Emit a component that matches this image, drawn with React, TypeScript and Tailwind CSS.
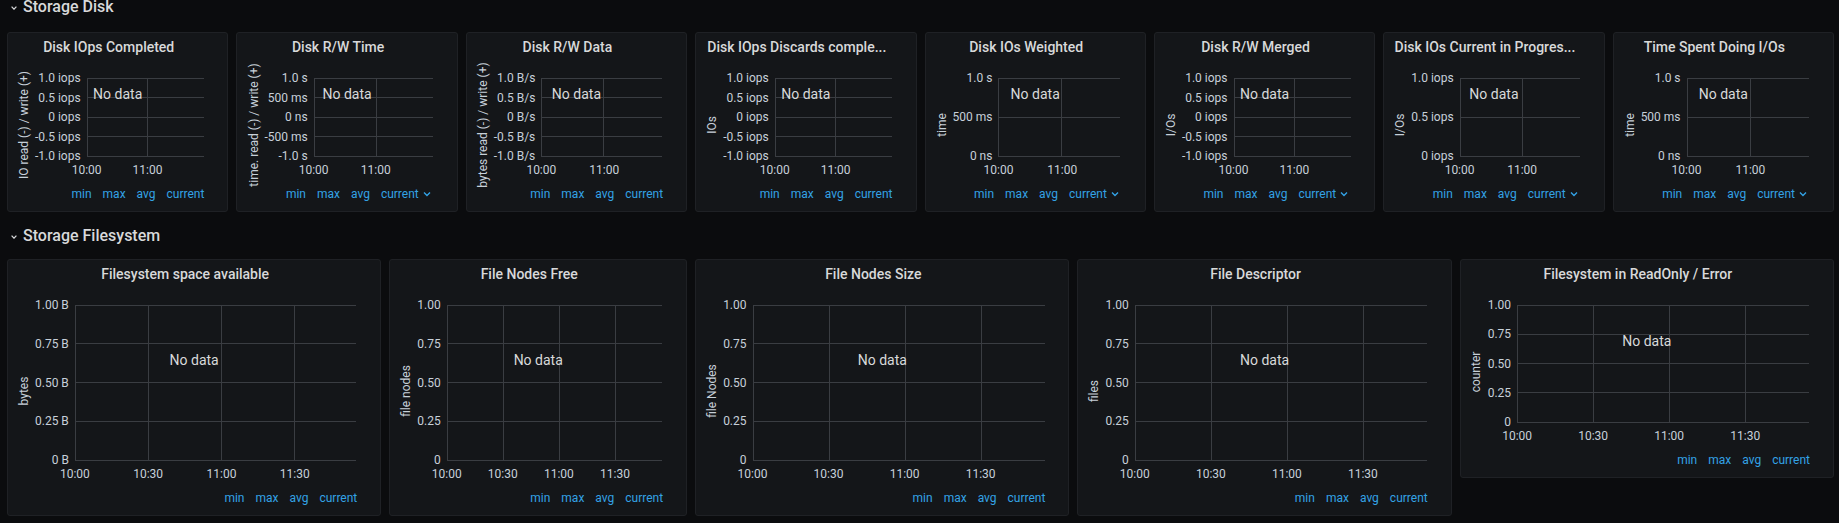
import React from 'react';

type PanelDef = {
  title: string;
  yLabel: string;
  ticks: string[];
  sort?: boolean;
  span: 3 | 4 | 5;
  short?: boolean;
};

const SPAN: Record<number, string> = { 3: 'col-span-3', 4: 'col-span-4', 5: 'col-span-5' };

const IOPS = ['1.0 iops', '0.5 iops', '0 iops', '-0.5 iops', '-1.0 iops'];
const SECS = ['1.0 s', '500 ms', '0 ns'];
const FRAC = ['1.00', '0.75', '0.50', '0.25', '0'];

const X_DISK: [string, number][] = [['10:00', 0], ['11:00', 0.521]];
const X_FS: [string, number][] = [['10:00', 0], ['10:30', 0.2605], ['11:00', 0.521], ['11:30', 0.7815]];

const DISK: PanelDef[] = [
  { title: 'Disk IOps Completed', yLabel: 'IO read (-) / write (+)', ticks: IOPS, span: 3 },
  { title: 'Disk R/W Time', yLabel: 'time. read (-) / write (+)', ticks: ['1.0 s', '500 ms', '0 ns', '-500 ms', '-1.0 s'], sort: true, span: 3 },
  { title: 'Disk R/W Data', yLabel: 'bytes read (-) / write (+)', ticks: ['1.0 B/s', '0.5 B/s', '0 B/s', '-0.5 B/s', '-1.0 B/s'], span: 3 },
  { title: 'Disk IOps Discards comple...', yLabel: 'IOs', ticks: IOPS, span: 3 },
  { title: 'Disk IOs Weighted', yLabel: 'time', ticks: SECS, sort: true, span: 3 },
  { title: 'Disk R/W Merged', yLabel: 'I/Os', ticks: IOPS, sort: true, span: 3 },
  { title: 'Disk IOs Current in Progres...', yLabel: 'I/Os', ticks: ['1.0 iops', '0.5 iops', '0 iops'], sort: true, span: 3 },
  { title: 'Time Spent Doing I/Os', yLabel: 'time', ticks: SECS, sort: true, span: 3 },
];

const FS: PanelDef[] = [
  { title: 'Filesystem space available', yLabel: 'bytes', ticks: ['1.00 B', '0.75 B', '0.50 B', '0.25 B', '0 B'], span: 5 },
  { title: 'File Nodes Free', yLabel: 'file nodes', ticks: FRAC, span: 4 },
  { title: 'File Nodes Size', yLabel: 'file Nodes', ticks: FRAC, span: 5 },
  { title: 'File Descriptor', yLabel: 'files', ticks: FRAC, span: 5 },
  { title: 'Filesystem in ReadOnly / Error', yLabel: 'counter', ticks: FRAC, span: 5, short: true },
];

function RowHeader({ title, className }: { title: string; className: string }) {
  return (
    <div className={`h-[14px] flex items-center pl-[11px] gap-[6px] ${className}`}>
      <svg width="6" height="4" viewBox="0 0 6 4" className="mt-px">
        <path d="M0.6 0.6 L3 3.2 L5.4 0.6" stroke="#d8d9da" strokeWidth="1.2" fill="none" />
      </svg>
      <span className="text-[16px] leading-4 font-medium text-[#d8d9da]">{title}</span>
    </div>
  );
}

function GraphPanel({ p, xTicks, height }: { p: PanelDef; xTicks: [string, number][]; height: string }) {
  const n = p.ticks.length - 1;
  return (
    <div className={`${SPAN[p.span]} ${height} relative flex flex-col bg-[#141619] border border-[#1f2125] rounded-[3px]`}>
      <div className="h-[28px] shrink-0 flex items-center justify-center pr-[18px]">
        <span className="text-[14px] leading-4 font-medium text-[#d8d9da] whitespace-nowrap">{p.title}</span>
      </div>

      <div className="flex-1 min-h-0 flex pt-[17px] pr-[24px]">
        <div className="w-[14px] ml-[9px] mr-[4px] mb-[30px] flex items-center justify-center">
          <span className="whitespace-nowrap -rotate-90 translate-y-[8px] text-[12px] leading-[14px] text-[#c7d0d9]">
            {p.yLabel}
          </span>
        </div>

        <div className="flex flex-col mr-[6px]">
          <div className="flex-1 -my-[7px] flex flex-col justify-between items-end">
            {p.ticks.map(t => (
              <span key={t} className="text-[12px] leading-[14px] text-[#c7d0d9] whitespace-nowrap">
                {t}
              </span>
            ))}
          </div>
          <div className="h-[30px] shrink-0" />
        </div>

        <div className="flex-1 min-w-0 flex flex-col">
          <div className="flex-1 relative">
            <svg className="absolute inset-0 w-full h-full overflow-visible" shapeRendering="crispEdges">
              {p.ticks.map((t, i) => (
                <line key={t} x1="0" x2="100%" y1={`${(i / n) * 100}%`} y2={`${(i / n) * 100}%`} stroke="#3a3d42" strokeWidth="1" />
              ))}
              {xTicks.map(([l, f]) => (
                <line key={l} x1={`${f * 100}%`} x2={`${f * 100}%`} y1="0" y2="100%" stroke="#3a3d42" strokeWidth="1" />
              ))}
            </svg>
          </div>
          <div className="h-[30px] shrink-0 relative">
            {xTicks.map(([l, f]) => (
              <span
                key={l}
                className="absolute top-[7px] -translate-x-1/2 text-[12px] leading-[14px] text-[#c7d0d9] whitespace-nowrap"
                style={{ left: `${f * 100}%` }}
              >
                {l}
              </span>
            ))}
          </div>
        </div>
      </div>

      <div className="h-4 mb-[9px] shrink-0 pr-[23px] flex items-center justify-end gap-[11px] text-[12px] leading-4 text-[#33a2e5]">
        <span>min</span>
        <span>max</span>
        <span>avg</span>
        <span className="flex items-center">
          current
          {p.sort && (
            <svg width="14" height="14" viewBox="0 0 14 14" className="ml-px">
              <path d="M4 5.5 L7 8.5 L10 5.5" stroke="#33a2e5" strokeWidth="1.4" fill="none" />
            </svg>
          )}
        </span>
      </div>

      <div className="absolute left-1/2 top-[calc(50%-28px)] -translate-x-1/2 -translate-y-1/2 text-[14px] leading-4 text-[#d8d9da] whitespace-nowrap">
        No data
      </div>
    </div>
  );
}

export default function App() {
  return (
    <div className="min-h-screen w-full bg-[#0b0c0e] font-[Roboto,_sans-serif]">
      <RowHeader title="Storage Disk" className="mb-[18px]" />
      <div className="grid grid-cols-[repeat(24,minmax(0,1fr))] gap-x-2 pl-[7px] pr-[5px]">
        {DISK.map(p => (
          <GraphPanel key={p.title} p={p} xTicks={X_DISK} height="h-[180px]" />
        ))}
      </div>

      <RowHeader title="Storage Filesystem" className="mt-[17px] mb-[16px]" />
      <div className="grid grid-cols-[repeat(24,minmax(0,1fr))] gap-x-2 pl-[7px] pr-[5px] items-start">
        {FS.map(p => (
          <GraphPanel key={p.title} p={p} xTicks={X_FS} height={p.short ? 'h-[219px]' : 'h-[257px]'} />
        ))}
      </div>
    </div>
  );
}
